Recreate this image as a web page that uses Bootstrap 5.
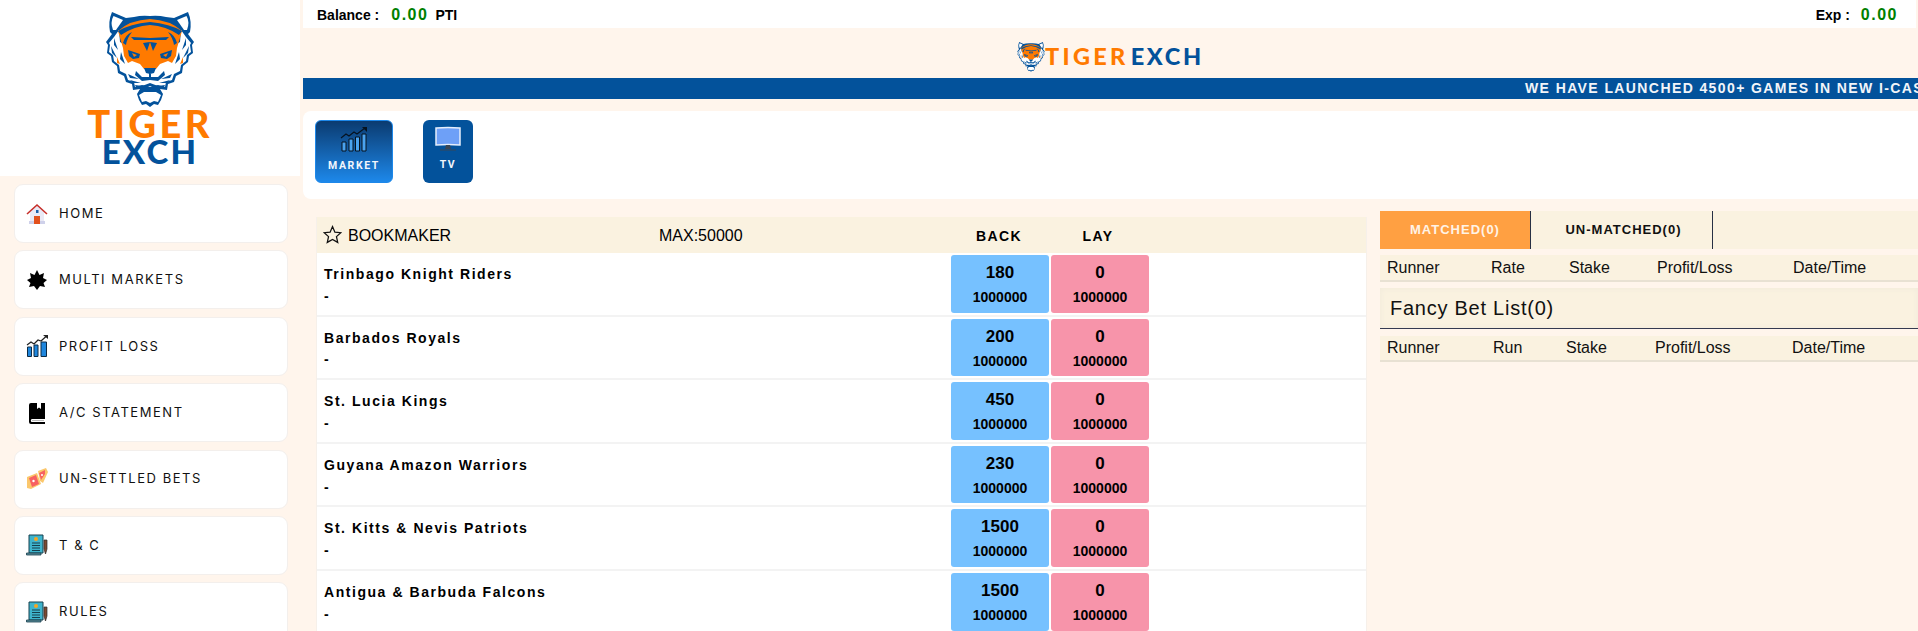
<!DOCTYPE html>
<html lang="en">
<head>
<meta charset="utf-8">
<title>Tiger Exch</title>
<link href="https://cdn.jsdelivr.net/npm/bootstrap@5.3.0/dist/css/bootstrap.min.css" rel="stylesheet">
<style>
html,body{height:631px;overflow:hidden}
body{background:#fff5ec;font-family:"Liberation Sans",Arial,sans-serif;color:#000}
.side-col{width:300px;flex:none;margin-right:3px}
.logo-box{height:176px;background:#fff}
.brand-t{font-family:Lato,"Liberation Sans",sans-serif;font-weight:900;line-height:1;color:#ff7a00}
.brand-e{font-family:Lato,"Liberation Sans",sans-serif;font-weight:900;line-height:1;color:#03529b}
.big-t{font-size:38px;letter-spacing:3.4px;margin-top:1px;height:30px;line-height:29px}
.big-e{font-size:33px;letter-spacing:2.2px;height:24px;line-height:24px}
.menu-stack{padding:8px 12px 0 14px;gap:7.4px}
.menu-tile{height:59px;flex:none;background:#fff;border:1px solid #f3efec;border-radius:9px;padding-left:11px;gap:11px;font-family:Inter,sans-serif;font-size:13px;letter-spacing:1.55px;color:#111;text-decoration:none}
.menu-tile svg{width:22px;height:22px;flex:none}
.main-col{min-width:0;flex:1}
.top-strip{height:28px;background:#fff;margin-right:2px;padding:2px 18px 0 14px;font-size:14px;font-weight:700}
.amt{color:#008000;font-size:16px;letter-spacing:1.5px;margin:0 7px 0 12px}
.amt-end{margin-right:0;margin-left:11px}
.head-logo{height:50px;padding-top:8px}
.small-t{font-size:23.500px;letter-spacing:3.3px;margin-right:2px}
.small-e{font-size:23.500px;letter-spacing:2.700px}
.ticker{height:21px;background:#03529b;color:#f2f5f9;font-size:14px;font-weight:700;letter-spacing:1.4px;line-height:21px;white-space:nowrap;overflow:hidden;padding-left:1222px}
.tab-panel{height:88px;margin-top:12px;background:#fff;border-radius:8px 0 0 8px;padding:9px 12px;gap:30px}
.tab-tile{height:63px;border-radius:6px;color:#f2f5fb;font-family:Roboto,sans-serif;font-size:10.500px;font-weight:700;letter-spacing:1.6px;text-decoration:none;padding-top:6px;gap:6px}
.tab-tile svg{height:25px;width:28px}
.tile-market{width:78px;background:linear-gradient(#0b3b70,#1d88ea);border:1px solid #1d88ea}
.tile-tv{width:50px;background:#03529b}
.content-wrap{gap:13px;padding-left:13px}
.book-wrap{width:1051px;flex:none;margin-top:18px;background:#fff;border:1px solid #f6f0ea;border-top:0}
.book-head{height:36px;background:#faf2e0;font-size:16px;padding-top:2px}
.star-cell{width:31px;padding-left:6px;margin-bottom:3px}
.star-cell svg{width:19px;height:19px}
.title-cell{width:311px}
.max-cell{width:291px}
.price-head{width:100px;text-align:center;font-size:14px;font-weight:700;letter-spacing:1.35px;flex:none;margin-left:-1px}
.run-row{height:63.600px;border-bottom:2px solid #f3f3f3;background:#fff}
.run-name{width:633px;padding:13px 0 0 7px;font-size:14px;font-weight:700;letter-spacing:1.55px;line-height:1.2}
.run-name div+div{margin-top:5px}
.price-box{width:98px;height:57.600px;margin:2px 1px 0;border-radius:3px;text-align:center;font-weight:700;flex:none;padding-top:8px}
.price-box b{display:block;font-size:17px;line-height:20px}
.price-box span{display:block;font-size:14px;margin-top:6px;line-height:16px}
.bk{background:#76c1ff}
.ly{background:#f794aa}
.bet-col{min-width:0;flex:1;margin-top:12px}
.bet-tabs{height:38px;background:#faf2e0}
.bet-tab{font-size:13px;font-weight:700;letter-spacing:1px;text-align:center;border-right:1px solid #273044;line-height:38px;color:#111}
.bet-on{width:151px;background:#ffa042;color:#fff3e6}
.bet-off{width:182px;padding-left:4px}
.mini-table{table-layout:fixed;width:100%;background:#faf2e0;margin:0}
.mini-table th{height:25px;padding:0 0 0 7px;font-size:16px;font-weight:400;line-height:25px;background:#faf2e0;color:#111;border-bottom:2px solid #e8e1d3}
.matched-t{margin-top:6px}
.fancy-title{margin-top:6px;height:41px;background:#faf2e0;border-bottom:1px solid #343a50;padding-left:10px;font-size:20px;letter-spacing:.75px;line-height:41px;color:#111;box-shadow:inset 0 0 6px #f0e9da}
.fancy-t{margin-top:7px}
.fancy-t th{height:24px;line-height:24px}
</style>
</head>
<body>
<svg width="0" height="0" class="d-block" aria-hidden="true">
<defs>
<g id="halfhead">
<path fill="#03529b" d="M6 0 20 6 28 5Q36 3 44 4V95L40 92 36 93 33 88 31 82 34 77 27 78 26 72 20 70 18 64 12 61 11 54 6 50 5 44 1 41 2 33 0 30 6 22 4 20Q2 9 6 0Z"/>
<path fill="#fff" d="M7.500 4 17 8 10 18 7 18Q4 10 7.500 4Z"/>
<path fill="#fff" d="M13 18 8 25 3 31 4 33 3 40 7 43 8 49 13 53 14 59 20 62 22 68 28 70 29 75 36 73 44 75V48L14 30Z"/>
<path fill="#ff7a00" d="M12 19Q24 8 44 7V56L38 57 34 52 26 49 22 51 18 44 17 36Z"/>
<path fill="#03529b" d="M12 19Q24 12 44 10V13Q28 14 15 23ZM17 31Q19 23 26 20 21 26 20 33ZM44 26V28L28 28 25 25ZM44 30 41 39 37 31ZM22 38 34 42 33 46 27 47 23 44ZM8 26 12 38 8 33ZM5 34 11 46 6 41ZM15 40 19 52 14 47Z"/>
<path fill="#ff7a00" d="M26 41 31 43 28 45ZM11 45 14 52 11 51Z"/>
<path fill="#03529b" d="M38 56H44V62L40 61ZM43 61H45V66H43ZM44 65V68L36 69 29 63 30 59 36 65Z"/>
<path fill="#03529b" d="M22 62 33 67 24 66ZM24 68 35 71 27 71ZM29 73 36 74 44 71V74L37 77 31 77Z"/>
<path fill="#03529b" d="M34 75H44V80H34Z"/>
<path fill="#fff" d="M33 83 38 80H44V91L40 89 36 90Z"/>
</g>
<g id="tigerhead"><use href="#halfhead"/><use href="#halfhead" transform="translate(88) scale(-1 1)"/></g>
<g id="scrollicon">
<path fill="#3eb4cc" stroke="#16404e" stroke-width="1" d="M3 1H17V19H3Z"/>
<path fill="#7d4a32" stroke="#2c2c2c" stroke-width=".7" d="M18 6H21V15L19.500 20 18 15Z"/>
<path fill="#5e8e9a" stroke="#16404e" stroke-width=".8" d="M.5 19H15V21H.5Z"/>
<circle cx="10" cy="5" r="2" fill="#f5a623"/>
<path stroke="#16404e" stroke-width="1" d="M6 9H14M6 11.500H14M6 14H14M6 16.500H14"/>
</g>
</defs>
</svg>
<div class="d-flex">
<aside class="side-col">
<div class="logo-box d-flex flex-column align-items-center pt-2">
<svg width="88" height="96" viewBox="0 0 88 96" class="mt-1" aria-label="Tiger"><use href="#tigerhead"/></svg>
<div class="brand-t big-t">TIGER</div>
<div class="brand-e big-e">EXCH</div>
</div>
<nav class="menu-stack d-flex flex-column">
<a class="menu-tile d-flex align-items-center" href="#"><svg viewBox="0 0 22 22"><path fill="#e9e9f5" d="M4 9 11 3 18 9V21H4Z"/><path fill="#cfd1ea" d="M3 18H19V21H3Z"/><path fill="none" stroke="#c62f2a" stroke-width="1.600" d="M1 11 11 2 21 11"/><path fill="#e2501c" d="M8 13H14V21H8Z"/><path fill="#1d5fa8" d="M10 7H12.500V10H10Z"/></svg>HOME</a>
<a class="menu-tile d-flex align-items-center" href="#"><svg viewBox="0 0 22 22"><path fill="#000" d="M11 1 13.500 6 18 4 17 9 21 11 17.500 14 19 18 14 17 11 21 8 17 3 18 4.500 14 1 11 5 9 4 4 8.500 6Z"/></svg>MULTI MARKETS</a>
<a class="menu-tile d-flex align-items-center" href="#"><svg viewBox="0 0 22 22"><path fill="#1f86dd" stroke="#0c2a44" d="M1.500 12H5.500V21.500H1.500ZM8 10H12V21.500H8ZM15 7H20.500V21.500H15Z"/><path fill="none" stroke="#222" stroke-width="1.200" d="M1 10 5 7 8 9 12 5 15 6 20 1.500"/><path fill="#222" d="M17 0H22V4Z"/></svg>PROFIT LOSS</a>
<a class="menu-tile d-flex align-items-center" href="#"><svg viewBox="0 0 22 22"><path fill="#000" d="M5 1H19V17H6Q4.800 17 4.800 18.500T6 20H19V22H5Q3 22 3 20V3Q3 1 5 1Z"/><path fill="#fff" d="M11 1H15V7L13 5.500 11 7Z"/><path fill="#bbb" d="M6 18H18V19H6Z"/></svg>A/C STATEMENT</a>
<a class="menu-tile d-flex align-items-center" href="#"><svg viewBox="0 0 22 22"><path fill="#fbc76c" d="M1 9 11 5 15 16 5 21 1 20Z"/><path fill="#fbc76c" d="M12 3 20 0 22 4 17 15 14 13Z"/><path fill="#f76161" d="M3 10 10 7 13 16 6 19ZM13 5 19 2 19 6 15 12Z"/><circle cx="7.500" cy="13" r="1.200" fill="#fff"/><circle cx="16" cy="7" r="1" fill="#fff"/></svg>UN-SETTLED BETS</a>
<a class="menu-tile d-flex align-items-center" href="#"><svg viewBox="0 0 22 22"><use href="#scrollicon"/></svg>T &amp; C</a>
<a class="menu-tile d-flex align-items-center" href="#"><svg viewBox="0 0 22 22"><use href="#scrollicon"/></svg>RULES</a>
</nav>
</aside>
<main class="main-col">
<div class="top-strip d-flex align-items-center justify-content-between">
<div class="d-flex align-items-center"><span>Balance :</span><span class="amt">0.00</span><span>PTI</span></div>
<div class="d-flex align-items-center"><span>Exp :</span><span class="amt amt-end">0.00</span></div>
</div>
<div class="head-logo d-flex align-items-center justify-content-center">
<svg width="28" height="30" viewBox="0 0 88 96" aria-label="Tiger"><use href="#tigerhead"/></svg>
<span class="brand-t small-t">TIGER</span><span class="brand-e small-e">EXCH</span>
</div>
<div class="ticker">WE HAVE LAUNCHED 4500+ GAMES IN NEW I-CASINO</div>
<div class="tab-panel d-flex">
<a class="tab-tile tile-market d-flex flex-column align-items-center" href="#"><svg viewBox="0 0 28 25"><path fill="#4aa3ef" stroke="#06121f" d="M2 15H6V24H2ZM9 12H13V24H9ZM15.500 10H19.500V24H15.500ZM22 7H26V24H22Z"/><path fill="none" stroke="#06121f" stroke-width="1.100" d="M1 11 6 7 9 9 14 5 17 7 25 1"/><path fill="#06121f" d="M22 0H27V5Z"/></svg>MARKET</a>
<a class="tab-tile tile-tv d-flex flex-column align-items-center" href="#"><svg viewBox="0 0 28 25"><path fill="#6ea0f7" stroke="#e6eefb" stroke-width="1.500" d="M2 2Q14 1 26 2V19Q14 18 2 19Z"/><path fill="#3b4654" d="M12 19H16L17 23H11Z"/><path fill="#3b4654" d="M6 23.500H22V24.500H6Z"/></svg>TV</a>
</div>
<div class="content-wrap d-flex">
<section class="book-wrap">
<div class="book-head d-flex align-items-center">
<div class="star-cell d-flex"><svg viewBox="0 0 24 24"><path fill="none" stroke="#111" stroke-width="1.600" d="M12 2 15 9 22.500 9.700 17 14.700 18.600 22 12 18.200 5.400 22 7 14.700 1.500 9.700 9 9Z"/></svg></div>
<div class="title-cell">BOOKMAKER</div>
<div class="max-cell">MAX:50000</div>
<div class="price-head">BACK</div>
<div class="price-head">LAY</div>
</div>
<div class="run-row d-flex"><div class="run-name"><div>Trinbago Knight Riders</div><div>-</div></div><div class="price-box bk"><b>180</b><span>1000000</span></div><div class="price-box ly"><b>0</b><span>1000000</span></div></div>
<div class="run-row d-flex"><div class="run-name"><div>Barbados Royals</div><div>-</div></div><div class="price-box bk"><b>200</b><span>1000000</span></div><div class="price-box ly"><b>0</b><span>1000000</span></div></div>
<div class="run-row d-flex"><div class="run-name"><div>St. Lucia Kings</div><div>-</div></div><div class="price-box bk"><b>450</b><span>1000000</span></div><div class="price-box ly"><b>0</b><span>1000000</span></div></div>
<div class="run-row d-flex"><div class="run-name"><div>Guyana Amazon Warriors</div><div>-</div></div><div class="price-box bk"><b>230</b><span>1000000</span></div><div class="price-box ly"><b>0</b><span>1000000</span></div></div>
<div class="run-row d-flex"><div class="run-name"><div>St. Kitts &amp; Nevis Patriots</div><div>-</div></div><div class="price-box bk"><b>1500</b><span>1000000</span></div><div class="price-box ly"><b>0</b><span>1000000</span></div></div>
<div class="run-row d-flex"><div class="run-name"><div>Antigua &amp; Barbuda Falcons</div><div>-</div></div><div class="price-box bk"><b>1500</b><span>1000000</span></div><div class="price-box ly"><b>0</b><span>1000000</span></div></div>
</section>
<section class="bet-col">
<div class="bet-tabs d-flex"><div class="bet-tab bet-on">MATCHED(0)</div><div class="bet-tab bet-off">UN-MATCHED(0)</div></div>
<table class="table mini-table matched-t"><colgroup><col style="width:104px"><col style="width:78px"><col style="width:88px"><col style="width:136px"><col></colgroup><thead><tr><th>Runner</th><th>Rate</th><th>Stake</th><th>Profit/Loss</th><th>Date/Time</th></tr></thead></table>
<div class="fancy-title">Fancy Bet List(0)</div>
<table class="table mini-table fancy-t"><colgroup><col style="width:106px"><col style="width:73px"><col style="width:89px"><col style="width:137px"><col></colgroup><thead><tr><th>Runner</th><th>Run</th><th>Stake</th><th>Profit/Loss</th><th>Date/Time</th></tr></thead></table>
</section>
</div>
</main>
</div>
<script src="https://cdn.jsdelivr.net/npm/bootstrap@5.3.0/dist/js/bootstrap.bundle.min.js"></script>
</body>
</html>
